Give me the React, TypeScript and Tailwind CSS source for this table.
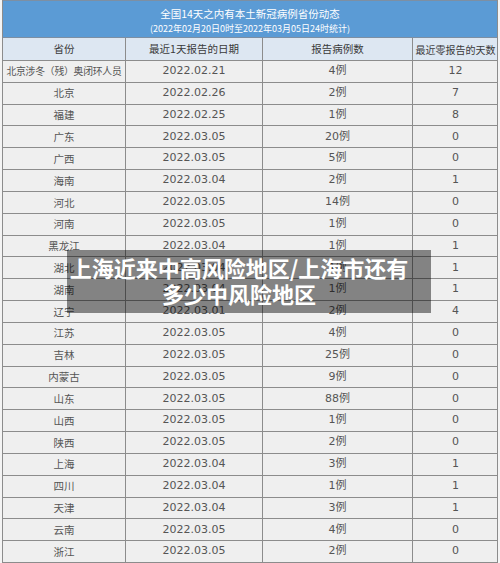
const rows: [string, string, string, string][] = [
  ['北京涉冬（残）奥闭环人员', '2022.02.21', '4例', '12'],
  ['北京', '2022.02.26', '2例', '7'],
  ['福建', '2022.02.25', '1例', '8'],
  ['广东', '2022.03.05', '20例', '0'],
  ['广西', '2022.03.05', '5例', '0'],
  ['海南', '2022.03.04', '2例', '1'],
  ['河北', '2022.03.05', '14例', '0'],
  ['河南', '2022.03.05', '1例', '0'],
  ['黑龙江', '2022.03.04', '1例', '1'],
  ['湖北', '2022.03.04', '1例', '1'],
  ['湖南', '2022.03.04', '1例', '1'],
  ['辽宁', '2022.03.01', '2例', '4'],
  ['江苏', '2022.03.05', '4例', '0'],
  ['吉林', '2022.03.05', '25例', '0'],
  ['内蒙古', '2022.03.05', '9例', '0'],
  ['山东', '2022.03.05', '88例', '0'],
  ['山西', '2022.03.05', '1例', '0'],
  ['陕西', '2022.03.05', '2例', '0'],
  ['上海', '2022.03.04', '3例', '1'],
  ['四川', '2022.03.04', '1例', '1'],
  ['天津', '2022.03.04', '3例', '1'],
  ['云南', '2022.03.05', '4例', '0'],
  ['浙江', '2022.03.05', '2例', '0'],
]

const font = { fontFamily: '"DejaVu Sans", "Noto Sans CJK SC", sans-serif' }
const cjk = { fontFamily: '"Noto Sans CJK SC", sans-serif' }
const cols = 'grid grid-cols-[123px_137px_150px_85px]'

export default function App() {
  return (
    <div className="relative w-[500px] h-[563px] bg-[#f4f4f4] overflow-hidden" style={font}>
      <div className="ml-[2px] w-[496px] border-l border-r border-[#8c8c8c]">
        {/* title */}
        <div className="h-[38px] bg-[#5b9bd5] border-t border-b border-[#7d8fa3] flex flex-col items-center text-white" style={cjk}>
          <div className="text-[10.5px] leading-[14px] mt-[6px]">全国14天之内有本土新冠病例省份动态</div>
          <div className="text-[9px] leading-[12px] mt-[2px]">(2022年02月20日0时至2022年03月05日24时统计)</div>
        </div>

        {/* column headers */}
        <div className={`${cols} h-[23px] bg-[#dde7f2] border-b border-[#8c8c8c] text-[10.5px] text-[#3a3a3a] whitespace-nowrap`} style={cjk}>
          <div className="flex items-center justify-center border-r border-[#8c8c8c]">省份</div>
          <div className="flex items-center justify-center border-r border-[#8c8c8c]">最近1天报告的日期</div>
          <div className="flex items-center justify-center border-r border-[#8c8c8c]">报告病例数</div>
          <div className="flex items-center justify-center text-[10px]">最近零报告的天数</div>
        </div>

        {rows.map((r, i) => (
          <div key={i} className={`${cols} h-[21.83px] bg-[#efefef] border-b border-[#8c8c8c] text-[11px] text-[#555]`}>
            <div
              className={`flex items-center justify-center border-r border-[#8c8c8c] whitespace-nowrap ${i === 0 ? 'text-[9.8px] tracking-[-0.2px]' : 'text-[10.5px]'}`}
              style={cjk}
            >
              {r[0]}
            </div>
            <div className="flex items-center justify-center border-r border-[#8c8c8c]">{r[1]}</div>
            <div className="flex items-center justify-center border-r border-[#8c8c8c]">{r[2]}</div>
            <div className="flex items-center justify-center">{r[3]}</div>
          </div>
        ))}
      </div>

      {/* caption overlay */}
      <div className="absolute left-[67px] top-[250px] w-[364px] h-[63px] bg-black/45 pr-[20px] pt-[4px]">
        <div className="text-white font-bold text-[22px] leading-[26px] text-center" style={cjk}>
          上海近来中高风险地区/上海市还有
          <br />
          多少中风险地区
        </div>
      </div>
    </div>
  )
}
